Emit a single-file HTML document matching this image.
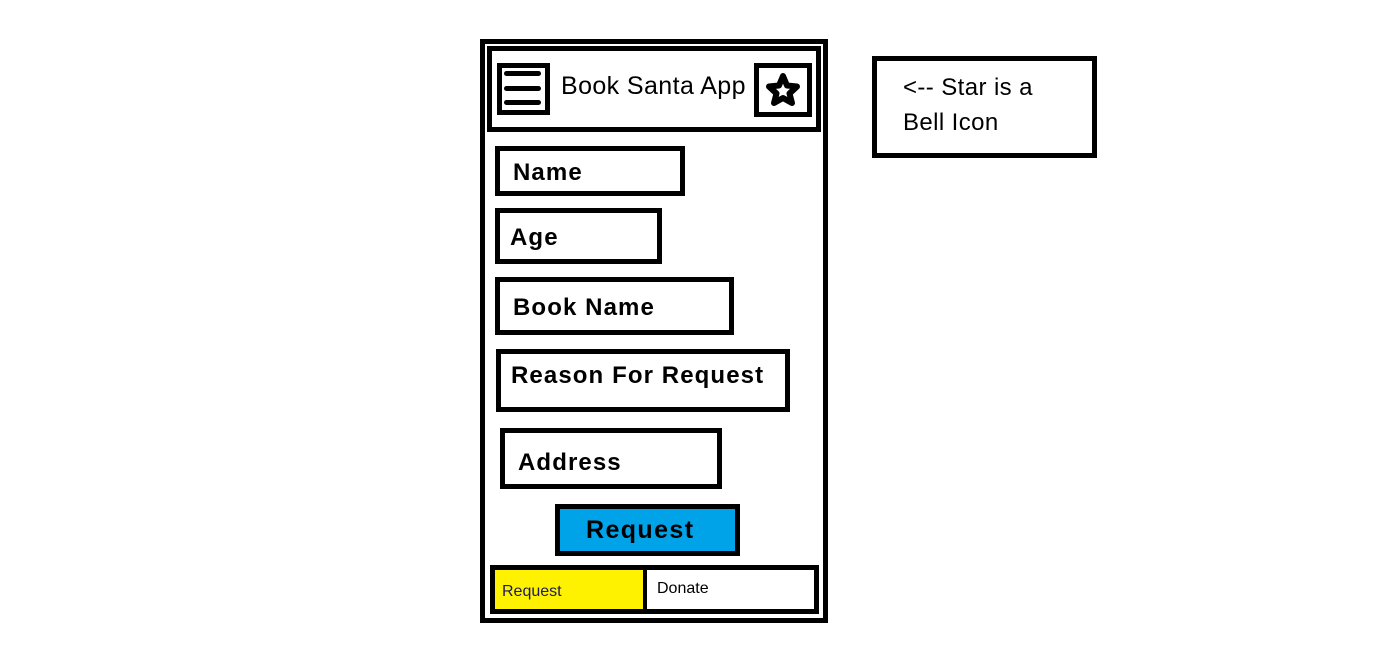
<!DOCTYPE html>
<html><head><style>
body{margin:0;width:1383px;height:659px;background:#fff;position:relative;overflow:hidden;font-family:"Liberation Sans",Arial,sans-serif;}
.b{position:absolute;border:5px solid #000;box-sizing:border-box;}
.t{position:absolute;white-space:nowrap;color:#000;}
.f{font-weight:bold;font-size:24px;line-height:22px;letter-spacing:1.1px;}
</style></head><body>
<div class="b" style="left:480px;top:39px;width:348px;height:584px;"></div>
<div class="b" style="left:487px;top:46px;width:334px;height:86px;"></div>
<div class="b" style="left:497px;top:63px;width:53px;height:52px;"></div>
<div style="position:absolute;left:504px;top:71px;width:37px;height:5px;background:#000;border-radius:3px"></div>
<div style="position:absolute;left:504px;top:86px;width:37px;height:5px;background:#000;border-radius:3px"></div>
<div style="position:absolute;left:504px;top:100px;width:37px;height:5px;background:#000;border-radius:3px"></div>
<div class="t" style="left:561px;top:74px;font-size:25px;line-height:25px;letter-spacing:0.4px">Book Santa App</div>
<div class="b" style="left:754px;top:63px;width:58px;height:54px;"></div>
<svg style="position:absolute;left:754px;top:63px" width="58" height="54">
<polygon points="29,13 33,22.5 43,23.5 35.5,30.5 38,40 29,35 20,40 22.5,30.5 15,23.5 25,22.5" fill="#fff" stroke="#000" stroke-width="6" stroke-linejoin="round"/>
</svg>
<div class="b" style="left:495px;top:146px;width:190px;height:50px;"></div>
<div class="t f" style="left:513px;top:162px">Name</div>
<div class="b" style="left:495px;top:208px;width:167px;height:56px;"></div>
<div class="t f" style="left:510px;top:227px">Age</div>
<div class="b" style="left:495px;top:277px;width:239px;height:58px;"></div>
<div class="t f" style="left:513px;top:297px">Book Name</div>
<div class="b" style="left:496px;top:349px;width:294px;height:63px;"></div>
<div class="t f" style="left:511px;top:365px">Reason For Request</div>
<div class="b" style="left:500px;top:428px;width:222px;height:61px;"></div>
<div class="t f" style="left:518px;top:452px">Address</div>
<div class="b" style="left:555px;top:504px;width:185px;height:52px;background:#00a2e8;"></div>
<div class="t" style="left:586px;top:518px;font-weight:bold;font-size:25px;line-height:24px;letter-spacing:1.4px">Request</div>
<div class="b" style="left:490px;top:565px;width:329px;height:49px;"></div>
<div style="position:absolute;left:495px;top:570px;width:148px;height:39px;background:#fff200"></div>
<div style="position:absolute;left:643px;top:570px;width:4px;height:39px;background:#000"></div>
<div class="t" style="left:502px;top:584px;font-size:16px;line-height:16px;color:#1a1a60">Request</div>
<div class="t" style="left:657px;top:581px;font-size:16px;line-height:16px">Donate</div>
<div class="b" style="left:872px;top:56px;width:225px;height:102px;"></div>
<div class="t" style="left:903px;top:76px;font-size:24px;line-height:24px;letter-spacing:0.4px">&lt;-- Star is a</div>
<div class="t" style="left:903px;top:111px;font-size:24px;line-height:24px;letter-spacing:0.4px">Bell Icon</div>
</body></html>
